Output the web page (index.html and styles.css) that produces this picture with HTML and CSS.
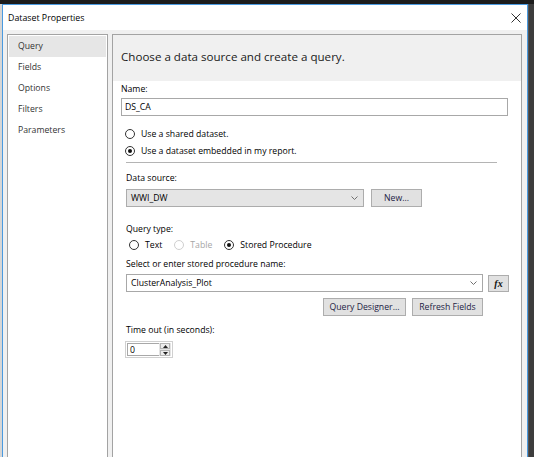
FILE: index.html
```html
<!DOCTYPE html>
<html>
<head>
<meta charset="utf-8">
<title>Dataset Properties</title>
<link rel="stylesheet" href="styles.css">
</head>
<body>
<div class="screen">
  <div class="topstrip"></div>
  <div class="row">
    <div class="leftstrip"></div>
    <div class="window">
      <div class="titlebar">
        <span class="title">Dataset Properties</span>
        <svg class="close" width="10" height="10" viewBox="0 0 10 10"><path d="M0.5 0.5 L9.5 9.5 M9.5 0.5 L0.5 9.5" stroke="#333" stroke-width="1" fill="none"/></svg>
      </div>
      <div class="body">
        <nav class="nav">
          <div class="nav-item active">Query</div>
          <div class="nav-item">Fields</div>
          <div class="nav-item">Options</div>
          <div class="nav-item">Filters</div>
          <div class="nav-item">Parameters</div>
        </nav>
        <section class="panel">
          <header class="panel-head">Choose a data source and create a query.</header>
          <div class="panel-body">
            <div class="lbl lbl-name">Name:</div>
            <div class="textbox name-box">DS_CA</div>

            <div class="radio-list">
              <div class="radio"><span class="dot"></span><span>Use a shared dataset.</span></div>
              <div class="radio"><span class="dot checked"></span><span>Use a dataset embedded in my report.</span></div>
            </div>

            <div class="separator"></div>

            <div class="sub">
              <div class="lbl lbl-ds">Data source:</div>
              <div class="line">
                <div class="select">
                  <span>WWI_DW</span>
                  <svg class="chev" width="7" height="4" viewBox="0 0 7 4"><path d="M0.5 0.5 L3.5 3.5 L6.5 0.5" stroke="#707070" stroke-width="1" fill="none"/></svg>
                </div>
                <div class="btn btn-new">New...</div>
              </div>

              <div class="lbl lbl-qt">Query type:</div>
              <div class="qt-row">
                <div class="radio"><span class="dot"></span><span>Text</span></div>
                <div class="radio disabled"><span class="dot"></span><span>Table</span></div>
                <div class="radio"><span class="dot checked"></span><span>Stored Procedure</span></div>
              </div>

              <div class="lbl lbl-sp">Select or enter stored procedure name:</div>
              <div class="line line-sp">
                <div class="combo">
                  <span>ClusterAnalysis_Plot</span>
                  <svg class="chev" width="7" height="4" viewBox="0 0 7 4"><path d="M0.5 0.5 L3.5 3.5 L6.5 0.5" stroke="#707070" stroke-width="1" fill="none"/></svg>
                </div>
                <div class="btn btn-fx"><span class="fx">fx</span></div>
              </div>

              <div class="btn-row">
                <div class="btn btn-qd">Query Designer...</div>
                <div class="btn btn-rf">Refresh Fields</div>
              </div>

              <div class="lbl lbl-to">Time out (in seconds):</div>
              <div class="spin">
                <div class="spin-val">0</div>
                <div class="spin-btns">
                  <div class="spin-btn"><svg width="5" height="3" viewBox="0 0 5 3"><path d="M0 3 L2.5 0 L5 3 Z" fill="#222"/></svg></div>
                  <div class="spin-btn"><svg width="5" height="3" viewBox="0 0 5 3"><path d="M0 0 L2.5 3 L5 0 Z" fill="#222"/></svg></div>
                </div>
              </div>
            </div>
          </div>
        </section>
      </div>
    </div>
    <div class="rightstrip"></div>
  </div>
</div>
</body>
</html>
```

FILE: styles.css
```css
* { box-sizing: border-box; }
html, body { margin: 0; padding: 0; }
body {
  width: 534px;
  height: 457px;
  overflow: hidden;
  background: #3b3b3b;
  font-family: "Open Sans", "Noto Sans", sans-serif;
  font-size: 8.7px;
  color: #000;
}
.screen { display: flex; flex-direction: column; height: 457px; }
.topstrip { height: 4px; flex: none; background: #1c1c1c; }
.row { display: flex; flex: 1; min-height: 0; }
.leftstrip { width: 2px; flex: none; background: #d6d6d6; }
.rightstrip { flex: 1; background: #3d3d3d; border-left: 1px solid #555; }
.window {
  width: 526px;
  flex: none;
  border: 1px solid #4a9ae0;
  border-bottom: none;
  background: #f0f0f0;
  display: flex;
  flex-direction: column;
}
.titlebar {
  height: 25px;
  flex: none;
  background: #fff;
  display: flex;
  align-items: center;
  justify-content: space-between;
  padding: 0 6px 0 5px;
}
.title { font-size: 8.8px; color: #000; }
.close { display: block; }
.body {
  flex: 1;
  display: flex;
  gap: 4px;
  padding: 4px 5px 0 4px;
  min-height: 0;
}
.nav {
  width: 101px;
  flex: none;
  background: #fff;
  border: 1px solid #a3a3a3;
  border-bottom: none;
  padding: 1px;
}
.nav-item {
  height: 21px;
  line-height: 21px;
  padding-left: 9px;
  color: #333;
}
.nav-item.active { background: #e6e6e6; }
.panel {
  width: 410px;
  flex: none;
  background: #fff;
  border: 1px solid #a3a3a3;
  border-bottom: none;
  display: flex;
  flex-direction: column;
}
.panel-head {
  height: 46px;
  flex: none;
  background: #f0f0f0;
  display: flex;
  align-items: center;
  padding: 0 0 3px 8px;
  font-size: 11.6px;
  color: #1a1a1a;
}
.panel-body { padding: 0 8px; }
.lbl { line-height: 12px; height: 12px; white-space: nowrap; }
.lbl-name { margin-top: 2px; }
.textbox {
  height: 18px;
  border: 1px solid #a8a8a8;
  background: #fff;
  padding-left: 3px;
  line-height: 16px;
}
.name-box { margin-top: 3px; width: 387px; }
.radio-list { margin-top: 11px; margin-left: 4px; display: flex; flex-direction: column; gap: 3px; }
.radio { display: flex; align-items: center; height: 14px; gap: 6px; white-space: nowrap; }
.dot {
  width: 10px;
  height: 10px;
  border-radius: 50%;
  border: 1px solid #333;
  background: #fff;
  display: flex;
  align-items: center;
  justify-content: center;
  flex: none;
}
.dot.checked::after {
  content: "";
  width: 4px;
  height: 4px;
  border-radius: 50%;
  background: #111;
}
.radio.disabled { color: #a6a6a6; }
.radio.disabled .dot { border-color: #cfcfcf; }
.separator {
  margin-top: 4px;
  margin-left: 5px;
  width: 371px;
  height: 2px;
  border-top: 1px solid #b4b4b4;
  border-bottom: 1px solid #fff;
}
.sub { margin-left: 5px; }
.lbl-ds { margin-top: 8px; }
.line { display: flex; gap: 7px; margin-top: 5px; align-items: flex-start; }
.line-sp { gap: 5px; margin-top: 4px; }
.select {
  width: 238px;
  height: 18px;
  border: 1px solid #acacac;
  background: #e5e5e5;
  display: flex;
  align-items: center;
  justify-content: space-between;
  padding: 0 5px 0 4px;
}
.chev { display: block; }
.btn {
  height: 18px;
  border: 1px solid #adadad;
  background: #e1e1e1;
  display: flex;
  align-items: center;
  justify-content: center;
  color: #1c1c44;
  white-space: nowrap;
}
.btn-new { width: 51px; }
.lbl-qt { margin-top: 16px; }
.qt-row { margin-top: 3px; margin-left: 3px; display: flex; gap: 12px; }
.lbl-sp { margin-top: 6px; }
.combo {
  width: 357px;
  height: 18px;
  border: 1px solid #a8a8a8;
  background: #fff;
  display: flex;
  align-items: center;
  justify-content: space-between;
  padding: 0 5px 0 4px;
}
.btn-fx { width: 21px; height: 17px; margin-top: 1px; }
.fx {
  font-family: "Liberation Serif", serif;
  font-style: italic;
  font-weight: bold;
  font-size: 10px;
  color: #111;
}
.btn-row { width: 357px; display: flex; justify-content: flex-end; gap: 6px; margin-top: 6px; }
.btn-qd { width: 83px; }
.btn-rf { width: 71px; }
.lbl-to { margin-top: 8px; }
.spin {
  margin-top: 5px;
  margin-left: -1px;
  width: 48px;
  height: 17px;
  border: 1px solid #d0d0d0;
  background: #fff;
  display: flex;
  padding: 1px;
}
.spin-val { flex: 1; line-height: 13px; padding-left: 2px; border: 1px solid #a8a8a8; border-right: none; }
.spin-btns { width: 12px; display: flex; flex-direction: column; background: #e3e3e3; padding: 0 1px; gap: 1px; }
.spin-btn {
  flex: 1;
  border: 1px solid #b4b4b4;
  background: #ececec;
  display: flex;
  align-items: center;
  justify-content: center;
}
.spin-btn svg { display: block; }
```
